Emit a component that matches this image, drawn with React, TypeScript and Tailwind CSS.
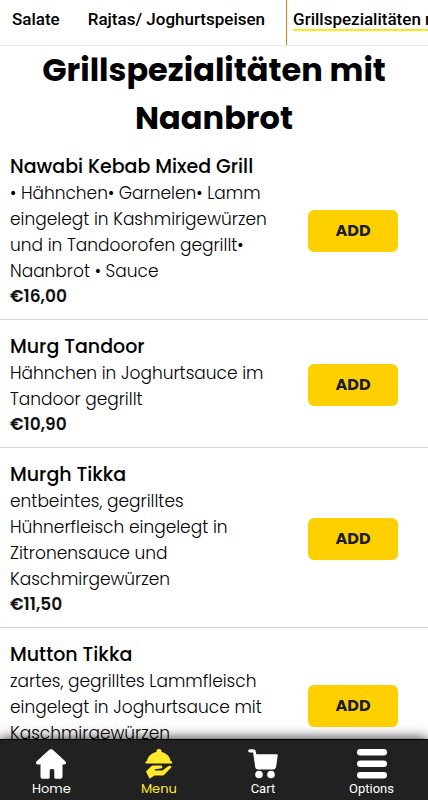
import React, { useState } from "react";

interface Dish {
	id: number;
	name: string;
	description: string;
	price: string;
}

const categories = [
	"Salate",
	"Rajtas/ Joghurtspeisen",
	"Grillspezialitäten mit Naanbrot",
];

const dishes: Dish[] = [
	{
		id: 1,
		name: "Nawabi Kebab Mixed Grill",
		description:
			"• Hähnchen• Garnelen• Lamm eingelegt in Kashmirigewürzen und in Tandoorofen gegrillt• Naanbrot • Sauce",
		price: "€16,00",
	},
	{
		id: 2,
		name: "Murg Tandoor",
		description: "Hähnchen in Joghurtsauce im Tandoor gegrillt",
		price: "€10,90",
	},
	{
		id: 3,
		name: "Murgh Tikka",
		description:
			"entbeintes, gegrilltes Hühnerfleisch eingelegt in Zitronensauce und Kaschmirgewürzen",
		price: "€11,50",
	},
	{
		id: 4,
		name: "Mutton Tikka",
		description:
			"zartes, gegrilltes Lammfleisch eingelegt in Joghurtsauce mit Kaschmirgewürzen",
		price: "€12,90",
	},
];

const HomeIcon = () => (
	<svg viewBox="0 0 32 32" className="size-8" fill="currentColor" aria-hidden="true">
		<path d="M14.3 1.700a2.600 2.600 0 0 1 3.400 0l12.600 11.600c1.400 1.300.7 3.200-1.200 3.200h-1.600v11.700a2.600 2.600 0 0 1-2.600 2.600h-4a1.600 1.600 0 0 1-1.600-1.600v-6.600a1.600 1.600 0 0 0-1.600-1.600h-1.400a1.600 1.600 0 0 0-1.600 1.600v6.600a1.600 1.600 0 0 1-1.600 1.600h-5a2.600 2.600 0 0 1-2.600-2.600V16.500H2.900c-1.900 0-2.600-1.900-1.200-3.200z" />
	</svg>
);

const DishIcon = () => (
	<svg viewBox="0 0 32 32" className="size-8" fill="currentColor" aria-hidden="true">
		<path d="M16 1a2.500 2.500 0 0 1 2.500 2.900C23.500 5 27 8.500 27.600 13.200h1.400v2.400H2.600v-2.400h1.400C4.600 8.500 8.200 5 13.500 3.900A2.500 2.500 0 0 1 16 1z" />
		<path d="M3 23.500l4.500-4.400c1.200-1.200 2.300-1.600 4-1.600h6.300c2 0 2.100 2.700.2 3l-6.200.8v1.300h7.700l5.600-4.400c1.600-1.200 3.900-.3 3.200 1.100-.1.300-.3.600-.5.800l-6.300 6.300c-.8.700-1.500 1-2.600 1h-7.400l-5 3.300z" />
	</svg>
);

const CartIcon = () => (
	<svg viewBox="0 0 32 32" className="size-8" fill="currentColor" aria-hidden="true">
		<path d="M2.800 1.200h3.400c1.300 0 2.300.8 2.500 2l.6 3h20.200c.8 0 1.300.6 1.200 1.400l-1.600 11.200c-.2 1.500-1.400 2.700-2.900 2.700H11c-1.500 0-2.600-1-2.800-2.500L6.100 4.500H2.800a1.600 1.600 0 0 1 0-3.300z" />
		<circle cx="12" cy="26.500" r="3.800" />
		<circle cx="24" cy="26.500" r="3.800" />
	</svg>
);

const OptionsIcon = () => (
	<svg viewBox="0 0 32 32" className="size-8" fill="currentColor" aria-hidden="true">
		<rect x="1" y="1" width="30" height="6.500" rx="3.250" />
		<rect x="1" y="12.500" width="30" height="6.500" rx="3.250" />
		<rect x="1" y="24" width="30" height="6.500" rx="3.250" />
	</svg>
);

const tabs = [
	{ label: "Home", icon: HomeIcon, font: "font-normal" },
	{ label: "Menu", icon: DishIcon, font: "font-normal" },
	{ label: "Cart", icon: CartIcon, font: "font-['Roboto',sans-serif] font-normal" },
	{ label: "Options", icon: OptionsIcon, font: "font-['Roboto',sans-serif] font-normal" },
];

const App: React.FC = () => {
	const [activeCategory, setActiveCategory] = useState(categories[2]);
	const [activeTab, setActiveTab] = useState("Menu");

	return (
		<div className="flex flex-col h-dvh bg-white text-black font-['Poppins','Inter',sans-serif]">
			<header className="shrink-0 flex h-[46px] pl-[5px] overflow-x-auto [scrollbar-width:none] border-b border-gray-200 font-['Roboto',sans-serif]">
				{categories.map((category) => (
					<button
						key={category}
						onClick={() => setActiveCategory(category)}
						className={`shrink-0 flex items-start pt-[9px] pl-[6px] pr-[21px] border-l text-[17px] leading-5 font-medium whitespace-nowrap ${
							category === activeCategory
								? "border-[#d9800f]"
								: "border-transparent"
						}`}>
						<span
							className={`border-b-2 ${
								category === activeCategory
									? "border-[#ffe81a]"
									: "border-transparent"
							}`}>
							{category}
						</span>
					</button>
				))}
			</header>

			<main className="flex-1 min-h-0 overflow-y-auto [scrollbar-width:none]">
				<h1 className="-mb-0.5 text-center text-[32px] leading-[48px] font-bold px-5">
					Grillspezialitäten mit Naanbrot
				</h1>
				<ul>
					{dishes.map((dish) => (
						<li
							key={dish.id}
							className="flex items-center justify-between border-b border-gray-300 pl-[10px] pr-[30px] pt-[13px] pb-[10px]">
							<div className="w-[270px]">
								<h2 className="text-[19px] leading-[27px] font-medium">
									{dish.name}
								</h2>
								<p className="text-[17px] leading-[26px] font-light">
									{dish.description}
								</p>
								<p className="text-[17px] leading-[25px] font-semibold text-[#111]">
									{dish.price}
								</p>
							</div>
							<button className="shrink-0 w-[90px] h-[42px] rounded-md bg-[#ffd000] text-base font-bold text-[#1c1c2b]">
								ADD
							</button>
						</li>
					))}
				</ul>
			</main>

			<nav className="relative shrink-0 flex justify-between pl-8 pr-[34px] border-t border-black bg-[#212121] pt-2 pb-[3px] shadow-[0_0_12px_rgba(0,0,0,0.9)]">
				{tabs.map(({ label, icon: Icon, font }) => (
					<button
						key={label}
						onClick={() => setActiveTab(label)}
						className={`flex flex-col items-center text-[13px] leading-[17px] ${font} ${
							label === activeTab ? "text-[#ffeb2b]" : "text-white"
						}`}>
						<Icon />
						{label}
					</button>
				))}
			</nav>
		</div>
	);
};

export default App;
